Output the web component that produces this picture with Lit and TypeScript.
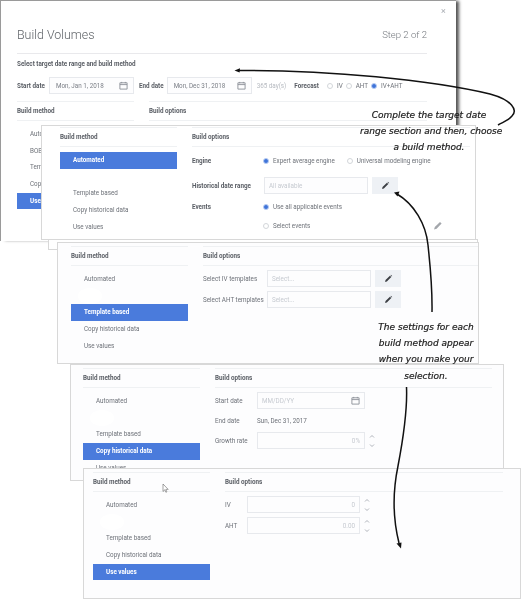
import { LitElement, html, css, svg } from "lit";
import { customElement } from "lit/decorators.js";

const calendar = html`<svg class="cal" viewBox="0 0 10 10"><path d="M1 2h8v7H1zM1 4h8M3 1v1.5M7 1v1.5" fill="none" stroke="#8b9097" stroke-width="1"/></svg>`;
const pencil = html`<svg class="pen" viewBox="0 0 10 10"><path d="M1.2 8.8l.5-2L6.6 1.9l1.5 1.5L3.2 8.3zM7.2 1.3l.5-.4 1.4 1.4-.4.5z" fill="currentColor"/></svg>`;
const spinner = html`<svg class="spin" viewBox="0 0 6 16"><path d="M1 4.5L3 2.5 5 4.5M1 11.5L3 13.5 5 11.5" fill="none" stroke="#9aa0a8" stroke-width=".8"/></svg>`;

const methods = ["Automated", "", "Template based", "Copy historical data", "Use values"];

@customElement("app-root")
export class AppRoot extends LitElement {
  static styles = css`
    :host { display: block; width: 521px; height: 599px; background: #fff; overflow: hidden; }
    .canvas { position: relative; width: 521px; height: 599px; overflow: hidden; background: #fff;
      font: 400 6.3px/10px Roboto, "Liberation Sans", sans-serif; color: #6d7178; filter: blur(.35px); }
    .win { position: absolute; box-sizing: border-box; background: #fdfdfe; border: 1px solid #d8d8d8; }
    .main { left: 0; top: 0; width: 456px; height: 241px; padding: 23px 29px 0 16px; background: #fff;
      border: 1px solid #9a9a9a; border-width: 1px 0 0 1px; box-shadow: 4px 0 3px -1px #555; }
    .close { position: absolute; left: 440px; top: 5px; color: #a9adb3; font-size: 9px; }
    .title { display: flex; justify-content: space-between; align-items: center; height: 22px;
      padding-bottom: 7px; border-bottom: 1px solid #e9e9ec; font-weight: 300; font-size: 12.4px; color: #5f6368; }
    .step { font-size: 9.5px; color: #75797f; }
    .sub { margin-top: 5px; font-weight: 700; color: #5a5e65; }
    .dates { display: flex; align-items: center; height: 17px; margin-top: 8px; }
    .dates b { font-weight: 700; color: #5a5e65; }
    .dates .input { width: 85px; margin: 0 5px 0 4px; padding: 0 5px 0 6px; }
    .dates .input.second { margin-left: 3px; }
    .days { color: #b6bac0; margin-right: 8px; margin-left: 0; }
    .fore { display: flex; align-items: center; gap: 4px; margin-left: 8px; }
    .fore .radio:not(:first-child) { margin-left: -1px; }
    .cols { display: grid; grid-template-columns: 117px 1fr; column-gap: 15px; }
    .head { box-sizing: border-box; height: 20px; line-height: 18px; border-top: 1px solid #eff1f3;
      border-bottom: 1px solid #eff1f3; font-weight: 700; color: #5a5e65; }
    .main .cols { margin-top: 7px; }
    .list { margin-top: 5px; }
    .item { box-sizing: border-box; height: 16.67px; line-height: 16.67px; padding-left: 13px; position: relative; }
    .item.sel { background: #4a7bdc; color: #fff; font-weight: 700; }
    .blob::before { content: ""; position: absolute; left: 7px; top: 0; width: 24px; height: 16px; border-radius: 50%; background: #fff; }
    .c1 { left: 41px; top: 125px; width: 435px; height: 115px; padding: 1px 5px 0 18px; background: #fff; }
    .under { left: 48px; top: 239px; width: 430px; height: 11px; background: #fff; }
    .c2 { left: 57px; top: 242px; width: 422px; height: 122px; padding: 3px 0 0 13px; }
    .c3 { left: 70px; top: 364px; width: 434px; height: 117px; padding: 3px 11px 0 12px; }
    .c4 { left: 83px; top: 468px; width: 438px; height: 131px; padding: 3px 17px 0 9px; }
    .form { display: grid; align-items: center; margin-top: 4px; row-gap: 4px; }
    .f1 { grid-template-columns: 72px 104px 30px 1fr; margin-top: 5px; grid-template-rows: 17px 17px 9px 13px; row-gap: 8px; }
    .f2 { grid-template-columns: 64px 104px 30px; grid-auto-rows: 17px; }
    .f3 { grid-template-columns: 42px 108px 12px; grid-auto-rows: 17px; row-gap: 3px; }
    .f4 { grid-template-columns: 22px 113px 12px; grid-auto-rows: 17px; }
    .strong { font-weight: 700; color: #5a5e65; }
    .input { box-sizing: border-box; height: 17px; border: 1px solid #e7e9ed; background: #fdfdfe;
      display: flex; align-items: center; justify-content: space-between; padding: 0 4px; color: #c6cad0; min-width: 0; }
    .input.filled { color: #7a7e85; }
    .input.right { justify-content: flex-end; }
    .btn { box-sizing: border-box; margin-left: 4px; width: 26px; height: 17px; background: #eef1f5;
      display: flex; align-items: center; justify-content: center; color: #3c3f44; }
    .cal { width: 9px; height: 9px; display: block; }
    .pen { width: 9px; height: 9px; display: block; }
    .spin { width: 6px; height: 16px; margin-left: 4px; display: block; }
    .radios { display: flex; align-items: center; gap: 4px; grid-column: 2 / -1; }
    .radios .radio { margin-left: -1px; }
    .radio { box-sizing: border-box; flex: none; width: 6px; height: 6px; border-radius: 50%; border: 1px solid #d3d6da; background: #fff; }
    .radio.on { background: #3f74d9; border-color: #b9cdf2; }
    .radios .radio.gap { margin-left: 8px; }
    .overlay { position: absolute; left: 0; top: 0; width: 521px; height: 599px; pointer-events: none; }
    .note { position: absolute; text-align: center; white-space: nowrap; color: #1a1a1a;
      font: italic 400 9px/16.2px "DejaVu Sans", sans-serif; -webkit-text-stroke: .2px #1a1a1a; }
    .n1 { left: 360px; top: 107px; width: 138px; }
    .n2 { left: 366px; top: 319px; width: 120px; }
  `;

  private head(t: string) { return html`<div class="head">${t}</div>`; }

  private list(sel: number, names = methods, blob = true) {
    return html`<div class="list">${names.map((m, i) => html`<div
      class="item ${i === sel ? "sel" : ""} ${blob && i === 1 ? "blob" : ""}">${m}</div>`)}</div>`;
  }

  render() {
    return html`<div class="canvas">
      <section class="win main">
        <div class="close">×</div>
        <div class="title"><span>Build Volumes</span><span class="step">Step 2 of 2</span></div>
        <div class="sub">Select target date range and build method</div>
        <div class="dates">
          <b>Start date</b>
          <div class="input filled"><span>Mon, Jan 1, 2018</span>${calendar}</div>
          <b>End date</b>
          <div class="input filled second"><span>Mon, Dec 31, 2018</span>${calendar}</div>
          <span class="days">365 day(s)</span>
          <b>Forecast</b>
          <div class="fore"><i class="radio"></i><span>IV</span><i class="radio"></i><span>AHT</span><i class="radio on"></i><span>IV+AHT</span></div>
        </div>
        <div class="cols">
          <div>${this.head("Build method")}${this.list(4, ["Automated", "BOB", "Template based", "Copy historical data", "Use values"], false)}</div>
          <div>${this.head("Build options")}</div>
        </div>
      </section>

      <section class="win c1">
        <div class="cols">
          <div>${this.head("Build method")}${this.list(0)}</div>
          <div>${this.head("Build options")}
            <div class="form f1">
              <span class="strong">Engine</span>
              <div class="radios"><i class="radio on"></i><span>Expert average engine</span><i class="radio gap"></i><span>Universal modeling engine</span></div>
              <span class="strong">Historical date range</span>
              <div class="input">All available</div>
              <div class="btn">${pencil}</div><span></span>
              <span class="strong">Events</span>
              <div class="radios"><i class="radio on"></i><span>Use all applicable events</span></div>
              <span></span>
              <div class="radios"><i class="radio"></i><span>Select events</span></div>
            </div>
          </div>
        </div>
      </section>
      <div class="win under"></div>

      <section class="win c2">
        <div class="cols">
          <div>${this.head("Build method")}${this.list(2)}</div>
          <div>${this.head("Build options")}
            <div class="form f2">
              <span>Select IV templates</span><div class="input">Select...</div><div class="btn">${pencil}</div>
              <span>Select AHT templates</span><div class="input">Select...</div><div class="btn">${pencil}</div>
            </div>
          </div>
        </div>
      </section>

      <section class="win c3">
        <div class="cols">
          <div>${this.head("Build method")}${this.list(3)}</div>
          <div>${this.head("Build options")}
            <div class="form f3">
              <span>Start date</span><div class="input"><span>MM/DD/YY</span>${calendar}</div><span></span>
              <span>End date</span><span class="filled">Sun, Dec 31, 2017</span><span></span>
              <span>Growth rate</span><div class="input right">0%</div>${spinner}
            </div>
          </div>
        </div>
      </section>

      <section class="win c4">
        <div class="cols">
          <div>${this.head("Build method")}${this.list(4)}</div>
          <div>${this.head("Build options")}
            <div class="form f4">
              <span>IV</span><div class="input right">0</div>${spinner}
              <span>AHT</span><div class="input right">0.00</div>${spinner}
            </div>
          </div>
        </div>
      </section>

      <svg class="overlay" viewBox="0 0 521 599">
        ${svg`
        <path d="M434 229.500l.8-2.600 5.200-5 1.600 1.600-5 5.200z" fill="#a3a6ab"/>
        <path d="M238 70.500C330 70 430 80 490 94C512 100 518 110 512 116C508 121 503 122 498 125" fill="none" stroke="#111" stroke-width="1.5"/>
        <path d="M234.500 70.500L240 68.200L239.600 72.600Z" fill="#111"/>
        <path d="M397 194C414 204 426 224 428 245C430 265 432.500 285 432 312" fill="none" stroke="#111" stroke-width="1.5"/>
        <path d="M394 192.500L399.500 191.500L397.500 196.500Z" fill="#111"/>
        <path d="M406.500 387C407.500 410 402 445 398 466C393 490 392 515 399 543" fill="none" stroke="#111" stroke-width="1.5"/>
        <path d="M401 548.500L396.500 543.500L401.500 542.500Z" fill="#111"/>
        <path d="M163 484v7.500l1.800-1.700 1.100 2.500 1-.5-1.100-2.400h2.400z" fill="#fff" stroke="#666" stroke-width=".6"/>
        `}
      </svg>
      <div class="note n1">Complete the target date<br>range section and then, choose<br>a build method.</div>
      <div class="note n2">The settings for each<br>build method appear<br>when you make your<br>selection.</div>
    </div>`;
  }
}
